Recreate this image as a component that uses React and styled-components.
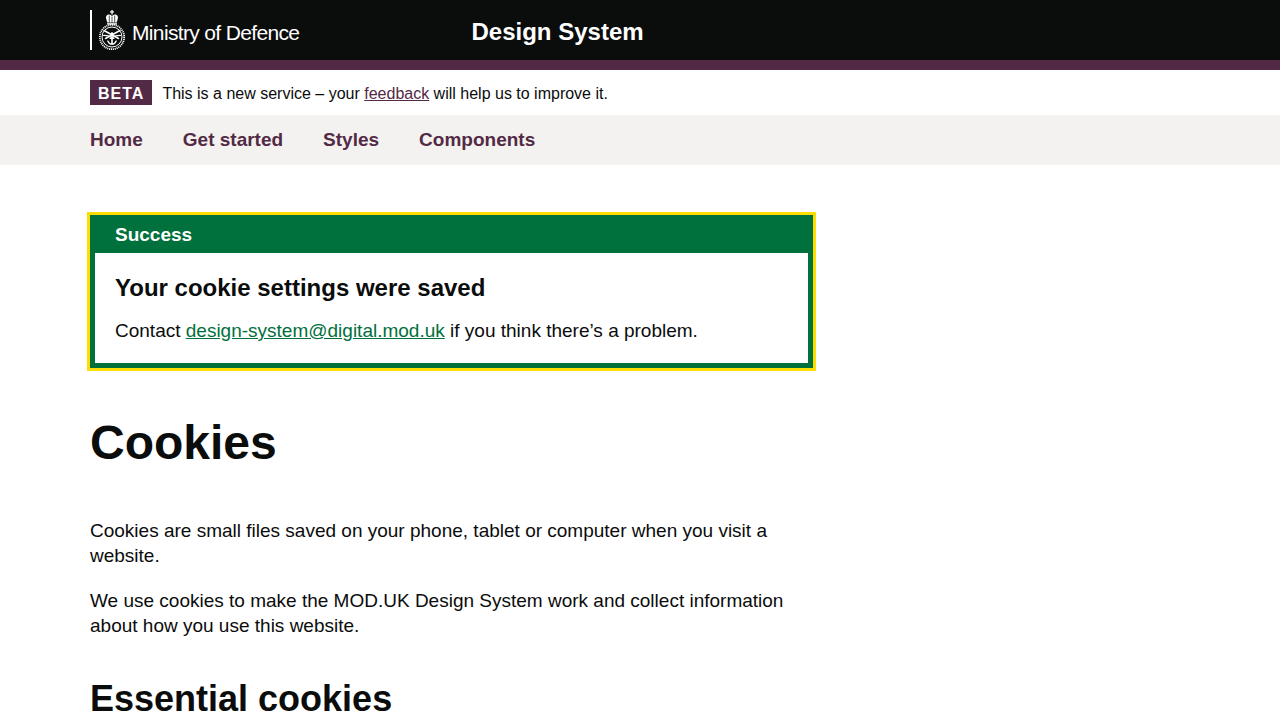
import React from "react";
import styled, { createGlobalStyle } from "styled-components";

const Global = createGlobalStyle`
  html, body { margin: 0; padding: 0; background: #fff; }
  body {
    font-family: Arial, "Liberation Sans", sans-serif;
    color: #0b0c0c;
    height: 720px;
    overflow: hidden;
    -webkit-font-smoothing: antialiased;
    -moz-osx-font-smoothing: grayscale;
  }
`;

const Page = styled.div`
  width: 1280px;
  height: 720px;
  overflow: hidden;
`;

const Header = styled.header`
  height: 60px;
  background: #0b0c0c;
  border-bottom: 10px solid #532a45;
  padding: 0 90px;
  display: flex;
  align-items: center;
`;

const Logo = styled.div`
  width: 381.5px;
  height: 40px;
  display: flex;
  align-items: center;
`;

const LogoRule = styled.span`
  width: 2px;
  height: 40px;
  background: #fff;
  margin-right: 6px;
`;

const LogoText = styled.span`
  font-size: 21px;
  letter-spacing: -0.65px;
  color: #fff;
  font-weight: 400;
  margin-left: 4px;
  margin-top: 6px;
  white-space: nowrap;
`;

const ServiceName = styled.a`
  font-size: 24px;
  font-weight: 700;
  line-height: 30px;
  color: #fff;
  margin-top: 4px;
`;

const PhaseBanner = styled.div`
  height: 45px;
  padding: 10px 90px 0;
  box-sizing: border-box;
  display: flex;
  align-items: flex-start;
`;

const PhaseTag = styled.strong`
  background: #532a45;
  color: #fff;
  font-size: 16px;
  font-weight: 700;
  letter-spacing: 1px;
  line-height: 25px;
  height: 25px;
  padding: 1px 8px 0;
  box-sizing: border-box;
  margin-right: 10px;
`;

const PhaseText = styled.span`
  font-size: 16px;
  line-height: 25px;
  padding-top: 1px;
`;

const PurpleLink = styled.a`
  color: #532a45;
  text-decoration: underline;
`;

const Nav = styled.nav`
  height: 50px;
  background: #f3f2f1;
  padding: 0 90px;
  display: flex;
  align-items: center;
  gap: 40px;
`;

const NavLink = styled.a`
  color: #532a45;
  font-size: 19px;
  font-weight: 700;
  line-height: 50px;
`;

const Main = styled.main`
  padding: 50px 90px 0;
  width: 723px;
`;

const Notification = styled.div`
  border: 5px solid #00703c;
  outline: 3px solid #ffdd00;
  background: #00703c;
  margin-bottom: 50px;
`;

const NotificationTitle = styled.h2`
  margin: 0;
  font-size: 19px;
  font-weight: 700;
  line-height: 25px;
  color: #fff;
  padding: 2px 20px 3px;
  height: 33px;
  box-sizing: border-box;
`;

const NotificationBody = styled.div`
  background: #fff;
  padding: 20px;
  height: 110px;
  box-sizing: border-box;
`;

const NotificationHeading = styled.p`
  margin: 0 0 15px;
  font-size: 24px;
  font-weight: 700;
  line-height: 30px;
`;

const NotificationText = styled.p`
  margin: 0;
  font-size: 19px;
  line-height: 25px;
`;

const GreenLink = styled.a`
  color: #00703c;
  text-decoration: underline;
`;

const Title = styled.h1`
  margin: 0 0 50px;
  font-size: 48px;
  font-weight: 700;
  line-height: 50px;
`;

const Body = styled.p`
  margin: 0 0 20px;
  font-size: 19px;
  line-height: 25px;
`;

const SectionTitle = styled.h2`
  margin: 41px 0 0;
  font-size: 36px;
  font-weight: 700;
  line-height: 40px;
`;

const Crest = () => (
  <svg width="30" height="40" viewBox="0 0 30 40" fill="none" style={{ display: "block" }}>
    <g fill="#fff">
      <rect x="13.4" y="0" width="1.3" height="4.5" />
      <rect x="12" y="1.3" width="4" height="1.2" />
      <path d="M8.4 9.5c-1.2-3 .6-5.3 3-4.9 1 .1 1.7.6 2.6 1.4.9-.8 1.6-1.3 2.6-1.4 2.4-.4 4.2 1.9 3 4.9l-.9 3H9.3z" />
      <rect x="9" y="13.2" width="10" height="1.4" />
    </g>
    <g stroke="#0b0c0c" strokeWidth=".7">
      <path d="M11.3 5.5v7M14 6.5v6M16.7 5.5v7" />
    </g>
    <circle cx="14" cy="27" r="12.2" stroke="#fff" strokeWidth="1.8" strokeDasharray="1.1 .8" />
    <circle cx="14" cy="27" r="10" stroke="#fff" strokeWidth="1" />
    <g stroke="#fff" strokeLinecap="round">
      <path d="M6 20.5 20.5 28.5" strokeWidth="1.5" />
      <path d="M22 20.5 7.5 28.5" strokeWidth="1.5" />
      <path d="M5.5 25.5c3-.2 5.5.4 8.5 2.2 3-1.8 5.5-2.4 8.5-2.2" strokeWidth="1.2" />
      <path d="M14 24.5v9.5" strokeWidth="1.6" />
      <path d="M9.8 31c.8 2 2.3 3.2 4.2 3.2s3.4-1.2 4.2-3.2" strokeWidth="1.3" />
      <path d="M12 28.5h4" strokeWidth="1" />
    </g>
    <circle cx="14" cy="23.5" r="1.3" fill="#fff" />
  </svg>
);

export default function App() {
  return (
    <Page>
      <Global />
      <Header>
        <Logo>
          <LogoRule />
          <Crest />
          <LogoText>Ministry of Defence</LogoText>
        </Logo>
        <ServiceName>Design System</ServiceName>
      </Header>
      <PhaseBanner>
        <PhaseTag>BETA</PhaseTag>
        <PhaseText>
          This is a new service – your <PurpleLink>feedback</PurpleLink> will help us to improve it.
        </PhaseText>
      </PhaseBanner>
      <Nav>
        <NavLink>Home</NavLink>
        <NavLink>Get started</NavLink>
        <NavLink>Styles</NavLink>
        <NavLink>Components</NavLink>
      </Nav>
      <Main>
        <Notification>
          <NotificationTitle>Success</NotificationTitle>
          <NotificationBody>
            <NotificationHeading>Your cookie settings were saved</NotificationHeading>
            <NotificationText>
              Contact <GreenLink>design-system@digital.mod.uk</GreenLink> if you think there’s a problem.
            </NotificationText>
          </NotificationBody>
        </Notification>
        <Title>Cookies</Title>
        <Body>Cookies are small files saved on your phone, tablet or computer when you visit a website.</Body>
        <Body>We use cookies to make the MOD.UK Design System work and collect information about how you use this website.</Body>
        <SectionTitle>Essential cookies</SectionTitle>
      </Main>
    </Page>
  );
}
